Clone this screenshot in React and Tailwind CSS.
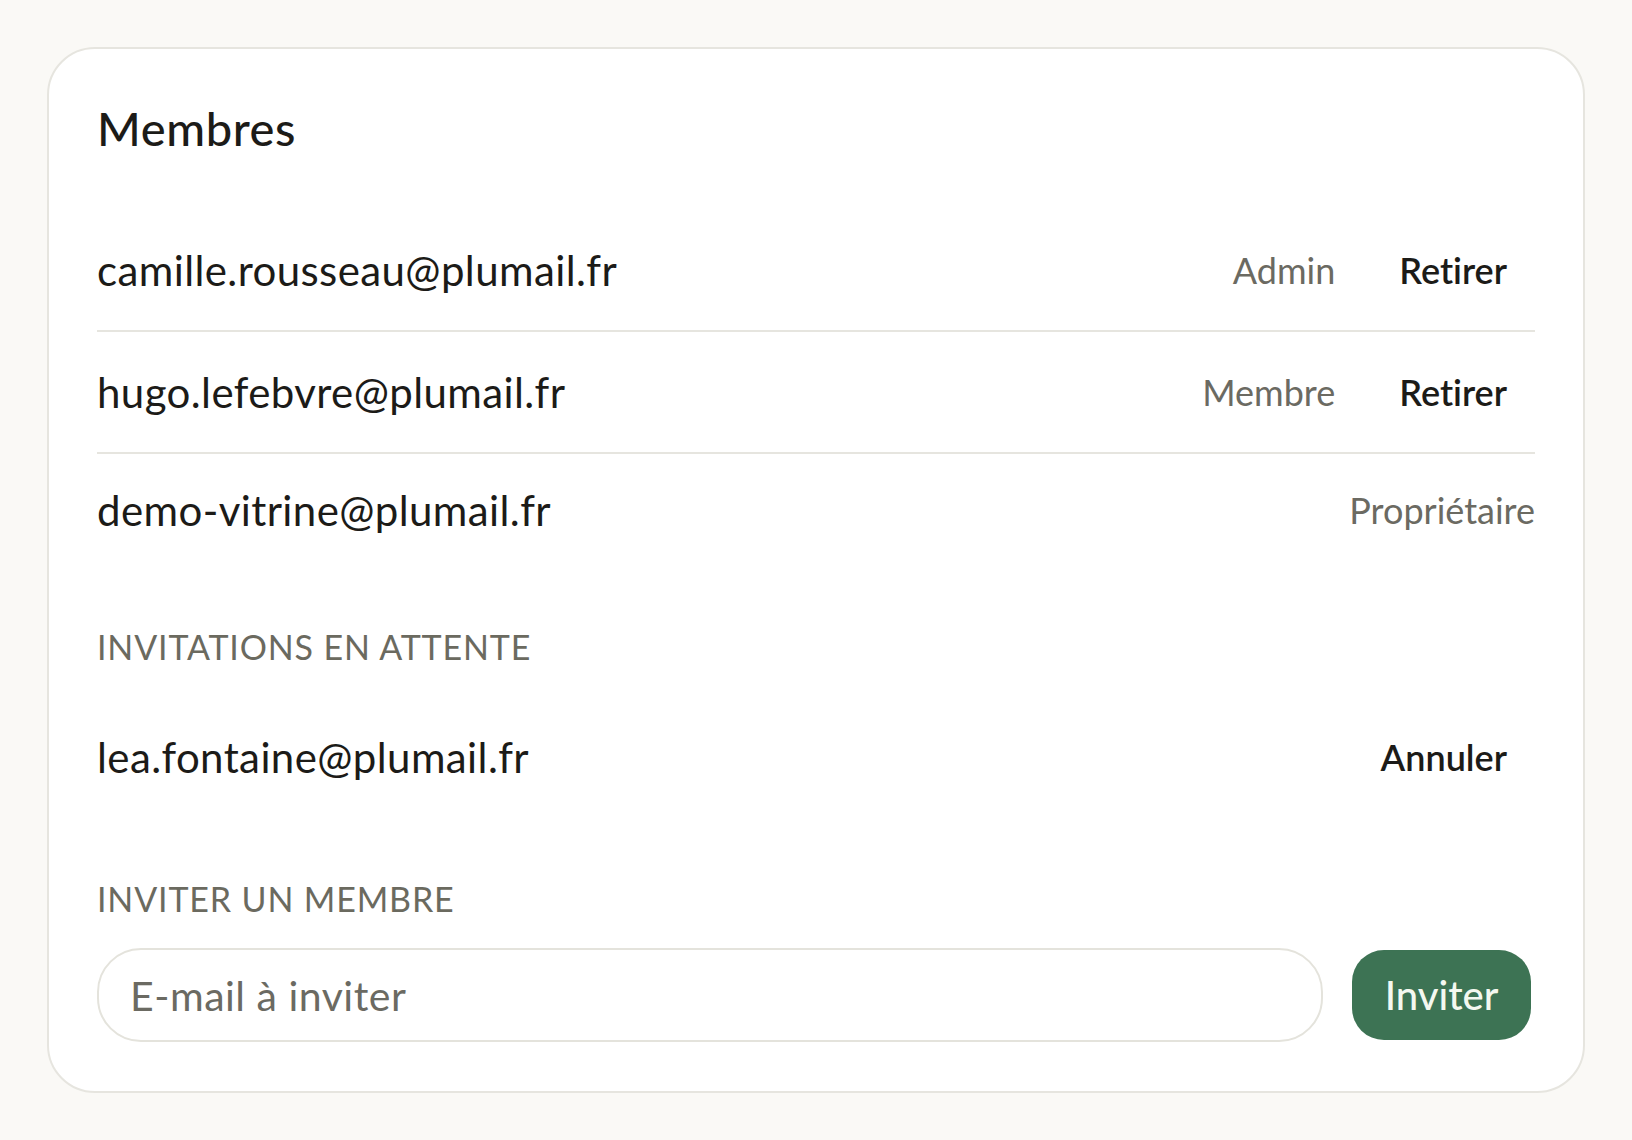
const MEMBERS = [
  { email: 'camille.rousseau@plumail.fr', role: 'Admin', removable: true },
  { email: 'hugo.lefebvre@plumail.fr', role: 'Membre', removable: true },
  { email: 'demo-vitrine@plumail.fr', role: 'Propriétaire', removable: false },
];

const INVITES = ['lea.fontaine@plumail.fr'];

const font = { fontFamily: 'Lato, "Noto Sans", sans-serif' };

export default function App() {
  return (
    <div className="min-h-[1140px] bg-[#faf9f6] p-[47px] text-[#1c1b18] [font-variant-ligatures:none]" style={font}>
      <div className="flex flex-col rounded-[48px] border-2 border-[#e6e5df] bg-white px-[48px] pt-[51px] pb-[49px]">
        <h2 className="h-[56px] text-[47px] leading-[56px] font-medium tracking-[0.6px]">Membres</h2>

        <ul className="mt-[54px] flex flex-col">
          {MEMBERS.map((m, i) => (
            <li
              key={m.email}
              className={`flex items-center justify-between ${i < MEMBERS.length - 1 ? 'h-[122px] border-b-2 border-[#e6e5df]' : 'h-[112px]'}`}
            >
              <span className="text-[42px] leading-[56px] tracking-[0.4px]">{m.email}</span>
              <div className="flex items-center gap-[36px]">
                <span className="text-[36px] leading-[48px] text-[#6b6a62]">{m.role}</span>
                {m.removable && (
                  <button className="px-[28px] text-[36px] leading-[48px] font-semibold text-[#1c1b18]">Retirer</button>
                )}
              </div>
            </li>
          ))}
        </ul>

        <h3 className="mt-[61px] h-[40px] text-[34px] leading-[40px] tracking-wide text-[#6b6a5f] uppercase">
          Invitations en attente
        </h3>
        <ul className="mt-[34px] flex flex-col">
          {INVITES.map((email) => (
            <li key={email} className="flex h-[112px] items-center justify-between">
              <span className="text-[42px] leading-[56px] tracking-[0.4px]">{email}</span>
              <button className="px-[28px] text-[36px] leading-[48px] font-semibold">Annuler</button>
            </li>
          ))}
        </ul>

        <h3 className="mt-[66px] h-[40px] text-[34px] leading-[40px] tracking-wide text-[#6b6a5f] uppercase">
          Inviter un membre
        </h3>
        <div className="mt-[29px] flex items-center gap-[29px]">
          <input
            type="email"
            placeholder="E-mail à inviter"
            className="h-[94px] min-w-0 flex-1 rounded-[44px] border-2 border-[#e4e3dc] bg-white px-[31px] text-[41px] tracking-[0.5px] text-[#1c1b18] outline-none placeholder:text-[#6b6a62]"
            style={font}
          />
          <button className="mr-[4px] h-[90px] w-[179px] rounded-[32px] bg-[#3d7354] text-[40px] font-medium text-[#f4f8f0]">
            Inviter
          </button>
        </div>
      </div>
    </div>
  );
}
